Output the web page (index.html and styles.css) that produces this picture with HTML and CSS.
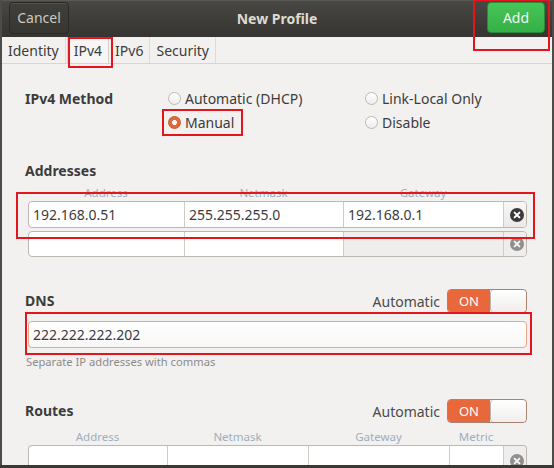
FILE: index.html
```html
<!DOCTYPE html>
<html>
<head>
<meta charset="utf-8">
<link rel="stylesheet" href="styles.css">
</head>
<body>
<div class="window">
  <header class="titlebar">
    <button class="btn-cancel">Cancel</button>
    <div class="title">New Profile</div>
    <button class="btn-add">Add</button>
  </header>
  <nav class="tabs">
    <div class="tab">Identity</div>
    <div class="tab active">IPv4</div>
    <div class="tab">IPv6</div>
    <div class="tab">Security</div>
  </nav>
  <main class="content">
    <section class="method">
      <div class="label">IPv4 Method</div>
      <label class="radio"><span class="dot"></span>Automatic (DHCP)</label>
      <label class="radio"><span class="dot"></span>Link-Local Only</label>
      <div></div>
      <label class="radio"><span class="dot on"></span>Manual</label>
      <label class="radio"><span class="dot"></span>Disable</label>
    </section>

    <section class="addresses">
      <h3 class="heading">Addresses</h3>
      <div class="colheads addr-cols">
        <span>Address</span><span>Netmask</span><span>Gateway</span><span></span>
      </div>
      <div class="row addr-cols">
        <div class="cell">192.168.0.51</div>
        <div class="cell">255.255.255.0</div>
        <div class="cell">192.168.0.1</div>
        <div class="cell xbtn"><svg width="14" height="14" viewBox="0 0 14 14"><circle cx="7" cy="7" r="7" fill="#3a3a3a"/><path d="M4.6 4.6L9.4 9.4M9.4 4.6L4.6 9.4" stroke="#fff" stroke-width="2" stroke-linecap="round"/></svg></div>
      </div>
      <div class="row addr-cols second">
        <div class="cell"></div>
        <div class="cell"></div>
        <div class="cell dim"></div>
        <div class="cell xbtn flat"><svg width="14" height="14" viewBox="0 0 14 14"><circle cx="7" cy="7" r="7" fill="#8f8f8f"/><path d="M4.6 4.6L9.4 9.4M9.4 4.6L4.6 9.4" stroke="#f2f2f2" stroke-width="2" stroke-linecap="round"/></svg></div>
      </div>
    </section>

    <section class="dns">
      <div class="headrow">
        <h3 class="heading">DNS</h3>
        <div class="auto">Automatic <span class="switch"><span class="on-part">ON</span><span class="knob"></span></span></div>
      </div>
      <div class="entry">222.222.222.202</div>
      <div class="hint">Separate IP addresses with commas</div>
    </section>

    <section class="routes">
      <div class="headrow">
        <h3 class="heading">Routes</h3>
        <div class="auto">Automatic <span class="switch"><span class="on-part">ON</span><span class="knob"></span></span></div>
      </div>
      <div class="colheads route-cols">
        <span>Address</span><span>Netmask</span><span>Gateway</span><span>Metric</span><span></span>
      </div>
      <div class="row route-cols">
        <div class="cell"></div>
        <div class="cell"></div>
        <div class="cell"></div>
        <div class="cell"></div>
        <div class="cell xbtn flat"><svg width="14" height="14" viewBox="0 0 14 14"><circle cx="7" cy="7" r="7" fill="#8f8f8f"/><path d="M4.6 4.6L9.4 9.4M9.4 4.6L4.6 9.4" stroke="#f2f2f2" stroke-width="2" stroke-linecap="round"/></svg></div>
      </div>
    </section>
  </main>
</div>

<div class="mark mark-add"></div>
<div class="mark mark-tab"></div>
<div class="mark mark-manual"></div>
<div class="mark mark-addr"></div>
<div class="mark mark-dns"></div>
</body>
</html>
```

FILE: styles.css
```css
* { box-sizing: border-box; margin: 0; padding: 0; }
html, body { width: 554px; height: 468px; overflow: hidden; }
body {
  position: relative;
  background: #3b3936;
  font-family: "Noto Sans", "Open Sans", "DejaVu Sans", sans-serif;
  font-size: 14px;
  color: #3c3c3c;
}
.window {
  width: 554px;
  height: 465px;
  border-left: 2px solid #4e4c48;
  border-right: 2px solid #4e4c48;
  background: #f2f1f0;
  overflow: hidden;
}

/* title bar */
.titlebar {
  height: 37px;
  display: grid;
  grid-template-columns: 1fr auto 1fr;
  align-items: center;
  padding: 0 7px 0 7px;
  background: linear-gradient(#4a4844, #3c3b37 60%, #363531);
  border-top: 1px solid #5a5853;
}
.btn-cancel {
  justify-self: start;
  height: 32px;
  width: 60px;
  margin-top: -3px;
  border: 1px solid #2a2926;
  border-radius: 4px;
  background: linear-gradient(#403f3b, #37362f);
  box-shadow: inset 0 1px 0 #55534e;
  color: #cdc9c1;
  font: 14px "Noto Sans", "Open Sans", sans-serif;
}
.title {
  color: #dfdbd2;
  font-weight: bold;
  font-size: 14px;
  margin-top: -2px;
}
.btn-add {
  justify-self: end;
  height: 31px;
  width: 58px;
  margin-top: -3px;
  border: 1px solid #2a8a39;
  border-radius: 4px;
  background: linear-gradient(#47c557, #34b146);
  color: #f4f4f4;
  font: 14px "Noto Sans", "Open Sans", sans-serif;
}

/* tabs */
.tabs {
  height: 27px;
  display: flex;
  align-items: stretch;
  border-bottom: 1px solid #d8d5d0;
  background: #f2f1f0;
}
.tab {
  padding: 0 6px;
  display: flex;
  align-items: center;
  border-right: 1px solid #dedbd6;
  color: #3c3c3c;
}
.tab.active {
  background: #f7f6f5;
  border: 1px solid #d4d1cb;
  border-bottom: none;
  margin-left: 1px;
}

/* content */
.content {
  padding: 22px 25px 0 23px;
}
.heading {
  font-size: 14px;
  font-weight: bold;
  line-height: 20px;
  color: #3c3c3c;
}
.method {
  display: grid;
  grid-template-columns: 143px 197px 1fr;
  grid-auto-rows: 24px;
  align-items: center;
}
.method .label { font-weight: bold; }
.radio {
  display: flex;
  align-items: center;
  gap: 4px;
}
.dot {
  width: 13px;
  height: 13px;
  border-radius: 50%;
  border: 1px solid #bdb9b3;
  background: linear-gradient(#ffffff, #eeedeb);
  flex: none;
}
.dot.on {
  border-color: #c8572c;
  background: radial-gradient(circle, #ffffff 0 2.2px, #e0693a 2.8px);
}

.addresses { margin-top: 27px; }
.colheads {
  display: grid;
  height: 14px;
  margin: 5px 0 1px 3px;
  font-size: 11.5px;
  line-height: 14px;
  color: #9cafbd;
  text-align: center;
}
.addr-cols { grid-template-columns: 156px 159px 160px 25px; }
.route-cols { grid-template-columns: 139px 141px 141px 54px 26px; }
.row {
  display: grid;
  height: 27px;
  margin-left: 3px;
  border: 1px solid #bcb8b1;
  border-radius: 4px;
  background: #fff;
  overflow: hidden;
}
.row.second { margin-top: 3px; height: 26px; }
.cell {
  border-right: 1px solid #cfccc6;
  padding-left: 4px;
  display: flex;
  align-items: center;
  color: #3c3c3c;
}
.cell.dim { background: #efeeec; }
.cell.xbtn {
  border-right: none;
  padding: 0;
  justify-content: center;
  background: linear-gradient(#f8f7f6, #eceae8);
}
.cell.xbtn.flat { background: #efeeec; }

.dns { margin-top: 32px; }
.headrow {
  display: flex;
  justify-content: space-between;
  align-items: center;
  height: 24px;
}
.auto {
  display: flex;
  align-items: center;
  gap: 7px;
  color: #4a4a4a;
}
.switch {
  display: flex;
  width: 80px;
  height: 24px;
  border: 1px solid #a98372;
  border-radius: 4px;
  overflow: hidden;
}
.on-part {
  width: 42px;
  background: #e9683b;
  color: #fff;
  font-size: 13px;
  display: flex;
  align-items: center;
  justify-content: center;
}
.knob {
  flex: 1;
  background: linear-gradient(#ffffff, #efeeec);
  border-left: 1px solid #b9b5af;
  border-radius: 4px;
}
.entry {
  margin: 8px 0 0 3px;
  height: 27px;
  border: 1px solid #e9a888;
  border-radius: 4px;
  background: linear-gradient(#ffffff, #f8f7f6);
  padding-left: 4px;
  display: flex;
  align-items: center;
}
.hint {
  margin-top: 7px;
  font-size: 11.2px;
  line-height: 14px;
  color: #8c8b88;
  padding-left: 1px;
}

.routes { margin-top: 30px; }
.routes .colheads { margin-top: 7px; }
.routes .row {
  border-bottom: none;
  border-radius: 4px 4px 0 0;
  height: 30px;
}

/* red annotation marks */
.mark {
  position: absolute;
  border: 2px solid #e3161d;
  pointer-events: none;
}
.mark-add { left: 473px; top: -1px; width: 77px; height: 52px; }
.mark-tab { left: 68px; top: 37px; width: 45px; height: 31px; }
.mark-manual { left: 162px; top: 109px; width: 81px; height: 27px; }
.mark-addr { left: 16px; top: 192px; width: 519px; height: 47px; }
.mark-dns { left: 25px; top: 312px; width: 507px; height: 43px; }
```
